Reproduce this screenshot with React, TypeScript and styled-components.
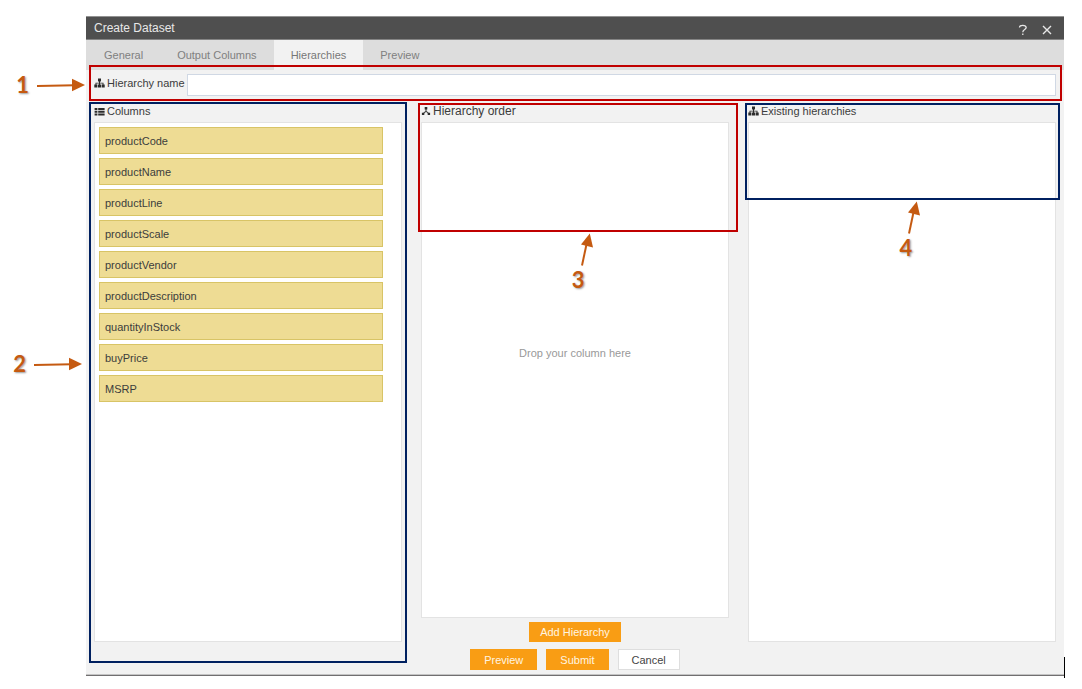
import React from "react";
import styled, { createGlobalStyle } from "styled-components";

const RED = "#c00000";
const NAVY = "#002060";
const RUST = "#c55a11";

const GlobalStyle = createGlobalStyle`
  *, *::before, *::after { box-sizing: border-box; }
  body {
    margin: 0;
    background: #fff;
    color: #3c3c3c;
    font-family: "Liberation Sans", Arial, sans-serif;
    font-size: 11px;
    line-height: 14px;
  }
  button, input { font: inherit; color: inherit; }
`;

const Page = styled.div`
  padding: 16px 18px 13px 86px;
`;

const Dialog = styled.main`
  position: relative;
  background: #f2f2f2;
  border-bottom: 1px solid #716f70;
  box-shadow: inset 0 -1px 0 #c4c4c4;
`;

const TitleBar = styled.header`
  display: flex;
  align-items: center;
  height: 24px;
  padding: 0 7px 0 8px;
  background: #4f4f4f;
  border-top: 1px solid #929292;
  border-bottom: 1px solid #848484;
  color: #e8e8e8;
`;

const Title = styled.h1`
  flex: 1;
  margin: 0;
  font-size: 12px;
  font-weight: 400;
  line-height: 14px;
`;

const TitleButton = styled.button`
  display: flex;
  align-items: center;
  justify-content: center;
  width: 20px;
  height: 20px;
  margin-left: 4px;
  padding: 4px 0 0;
  border: 0;
  background: none;
`;

const TabBar = styled.nav`
  display: flex;
  height: 30px;
  padding-left: 1px;
  background: #ddd;
`;

const Tab = styled.button<{ $active?: boolean }>`
  padding: 0 17px;
  border: 0;
  background: ${(p) => (p.$active ? "#f2f2f2" : "transparent")};
  color: ${(p) => (p.$active ? "#777" : "#808080")};
`;

const NameRow = styled.section`
  position: relative;
  display: flex;
  align-items: center;
  gap: 2px;
  padding: 4px 8px 7px;
`;

const IconLabel = styled.label`
  display: flex;
  align-items: center;
  gap: 2px;
  padding-bottom: 4px;
`;

const NameInput = styled.input`
  flex: 1;
  min-width: 0;
  height: 22px;
  padding: 0 6px;
  border: 1px solid #d0d8e4;
  background: #fff;
`;

const Panels = styled.div`
  display: grid;
  grid-template-columns: repeat(3, minmax(0, 1fr));
  gap: 19px;
  padding: 0 8px;
`;

const Panel = styled.section`
  position: relative;
  display: flex;
  flex-direction: column;
  min-height: 539px;
`;

const PanelTitle = styled.h2<{ $large?: boolean }>`
  display: flex;
  align-items: center;
  gap: 2px;
  height: 19px;
  margin: 0;
  padding-bottom: 3px;
  font-size: ${(p) => (p.$large ? 12 : 11)}px;
  font-weight: 400;
`;

const PanelBox = styled.div`
  flex: 1;
  border: 1px solid #e3e3e3;
  background: #fff;
`;

const DropZone = styled(PanelBox)`
  display: flex;
  align-items: center;
  justify-content: center;
  padding-bottom: 34px;
  color: #999;
`;

const ColumnList = styled.ul`
  display: flex;
  flex-direction: column;
  gap: 4px;
  margin: 0;
  padding: 4px 18px 4px 4px;
  list-style: none;
`;

const ColumnItem = styled.li`
  height: 27px;
  padding: 0 5px;
  border: 1px solid #d8c466;
  background: #eedc94;
  line-height: 26px;
`;

const Actions = styled.div<{ $top: number; $bottom?: number }>`
  display: flex;
  justify-content: center;
  gap: 9px;
  padding: ${(p) => p.$top}px 0 ${(p) => p.$bottom ?? 0}px;
`;

const Button = styled.button<{ $plain?: boolean; $compact?: boolean }>`
  height: ${(p) => (p.$compact ? 20 : 21)}px;
  padding: 0 ${(p) => (p.$compact ? 10 : 13)}px;
  border: 1px solid ${(p) => (p.$plain ? "#dedede" : "#f99d14")};
  background: ${(p) => (p.$plain ? "#fff" : "#f99d14")};
  color: ${(p) => (p.$plain ? "#444" : "#fff5e2")};
`;

const Caret = styled.span`
  position: absolute;
  right: -1px;
  bottom: -3px;
  width: 1px;
  height: 21px;
  background: #000;
`;

type FrameProps = {
  $color: string;
  $top: number;
  $left: number;
  $right: number;
  $bottom?: number;
  $height?: number;
};

const Frame = styled.div<FrameProps>`
  position: absolute;
  top: ${(p) => p.$top}px;
  left: ${(p) => p.$left}px;
  right: ${(p) => p.$right}px;
  ${(p) => (p.$bottom !== undefined ? `bottom: ${p.$bottom}px;` : "")}
  ${(p) => (p.$height !== undefined ? `height: ${p.$height}px;` : "")}
  border: 2px solid ${(p) => p.$color};
  pointer-events: none;
  z-index: 1;
`;

const Callout = styled.div`
  position: absolute;
  display: flex;
  color: ${RUST};
  font-family: Lato, "Open Sans", sans-serif;
  font-size: 22px;
  font-weight: 700;
  line-height: 22px;
  text-shadow: 1px 1px 2px rgba(0, 0, 0, 0.4);
`;

const SideCallout = styled(Callout)<{ $top: number; $offset: number }>`
  top: ${(p) => p.$top}px;
  right: calc(100% + ${(p) => p.$offset}px);
  align-items: center;
  gap: 8px;
`;

const BelowCallout = styled(Callout)<{ $left: number }>`
  top: calc(100% + 2px);
  left: ${(p) => p.$left}%;
  flex-direction: column;
  gap: 3px;
`;

const SitemapIcon = () => (
  <svg width="11" height="10" viewBox="0 0 11 10" fill="#2b2b2b" aria-hidden="true">
    <path d="M4 0.4h3v3H6v1.3h3.5v1.8h1.2v3H7.6v-3h1V5.6H6v.9h1v3H4v-3h1v-.9H2.4v.9h1v3H.3v-3h1.2V4.7H5V3.4H4z" />
  </svg>
);

const ListIcon = () => (
  <svg width="11" height="9" viewBox="0 0 11 9" fill="#2b2b2b" aria-hidden="true">
    <path d="M.6 1H3.4V3H.6zM4.2 1H10.6V3H4.2zM.6 3.8H3.4V5.8H.6zM4.2 3.8H10.6V5.8H4.2zM.6 6.6H3.4V8.6H.6zM4.2 6.6H10.6V8.6H4.2z" />
  </svg>
);

const BranchIcon = () => (
  <svg width="10" height="10" viewBox="0 0 10 10" aria-hidden="true">
    <path d="M5 2.5V5.2L2.2 7.6M5 5.2L7.8 7.6" fill="none" stroke="#444" strokeWidth="1.1" />
    <path d="M3.7 1H6.3V3.5H3.7zM.9 6.7H3.3V9H.9zM6.7 6.7H9.1V9H6.7z" fill="#2b2b2b" />
  </svg>
);

const HelpIcon = () => (
  <svg width="10" height="12" viewBox="0 0 10 12" fill="none" stroke="#e8e8e8" strokeWidth="1.3" aria-hidden="true">
    <path d="M1.5 3.6C1.5 2 2.6 1.4 4.8 1.4S8.2 2.2 8.2 3.6C8.2 5.6 4.8 5.4 4.8 8.2" />
    <path d="M4.8 9.5V11" />
  </svg>
);

const CloseIcon = () => (
  <svg width="10" height="10" viewBox="0 0 10 10" fill="none" stroke="#e8e8e8" strokeWidth="1.4" aria-hidden="true">
    <path d="M1 1L9 9M9 1L1 9" />
  </svg>
);

const ArrowRight = ({ width }: { width: number }) => (
  <svg width={width} height="14" viewBox={`0 0 ${width} 14`} aria-hidden="true">
    <path d={`M0 8L${width - 10} 7.2`} stroke={RUST} strokeWidth="2" />
    <path d={`M${width - 13} .8V13.2L${width} 7z`} fill={RUST} />
  </svg>
);

const ArrowUp = () => (
  <svg width="24" height="34" viewBox="0 0 24 34" aria-hidden="true">
    <path d="M10 33.5L15 10" stroke={RUST} strokeWidth="2" />
    <path d="M17.8 1.5L9 12.5L21 15.5z" fill={RUST} />
  </svg>
);

const columns = [
  "productCode",
  "productName",
  "productLine",
  "productScale",
  "productVendor",
  "productDescription",
  "quantityInStock",
  "buyPrice",
  "MSRP",
];

const tabs = ["General", "Output Columns", "Hierarchies", "Preview"];

export default function App() {
  return (
    <Page>
      <GlobalStyle />
      <Dialog>
        <TitleBar>
          <Title>Create Dataset</Title>
          <TitleButton type="button" aria-label="Help">
            <HelpIcon />
          </TitleButton>
          <TitleButton type="button" aria-label="Close">
            <CloseIcon />
          </TitleButton>
        </TitleBar>

        <TabBar>
          {tabs.map((name) => (
            <Tab key={name} type="button" $active={name === "Hierarchies"}>
              {name}
            </Tab>
          ))}
        </TabBar>

        <NameRow>
          <IconLabel htmlFor="hierarchy-name">
            <SitemapIcon />
            Hierarchy name
          </IconLabel>
          <NameInput id="hierarchy-name" type="text" />
          <Frame $color={RED} $top={-5} $left={3} $right={2} $bottom={2}>
            <SideCallout $top={7} $offset={6}>
              1<ArrowRight width={48} />
            </SideCallout>
          </Frame>
        </NameRow>

        <Panels>
          <Panel>
            <PanelTitle>
              <ListIcon />
              Columns
            </PanelTitle>
            <PanelBox>
              <ColumnList>
                {columns.map((name) => (
                  <ColumnItem key={name}>{name}</ColumnItem>
                ))}
              </ColumnList>
            </PanelBox>
            <Frame $color={NAVY} $top={-1} $left={-5} $right={-5} $bottom={-21}>
              <SideCallout $top={249} $offset={9}>
                2<ArrowRight width={48} />
              </SideCallout>
            </Frame>
          </Panel>

          <Panel>
            <PanelTitle $large>
              <BranchIcon />
              Hierarchy order
            </PanelTitle>
            <DropZone>Drop your column here</DropZone>
            <Actions $top={4}>
              <Button type="button" $compact>
                Add Hierarchy
              </Button>
            </Actions>
            <Frame $color={RED} $top={0} $left={-3} $right={-9} $height={129}>
              <BelowCallout $left={48}>
                <ArrowUp />3
              </BelowCallout>
            </Frame>
          </Panel>

          <Panel>
            <PanelTitle>
              <SitemapIcon />
              Existing hierarchies
            </PanelTitle>
            <PanelBox />
            <Frame $color={NAVY} $top={0} $left={-3} $right={-4} $height={97}>
              <BelowCallout $left={49}>
                <ArrowUp />4
              </BelowCallout>
            </Frame>
          </Panel>
        </Panels>

        <Actions $top={7} $bottom={5}>
          <Button type="button">Preview</Button>
          <Button type="button">Submit</Button>
          <Button type="button" $plain>
            Cancel
          </Button>
        </Actions>
        <Caret />
      </Dialog>
    </Page>
  );
}
